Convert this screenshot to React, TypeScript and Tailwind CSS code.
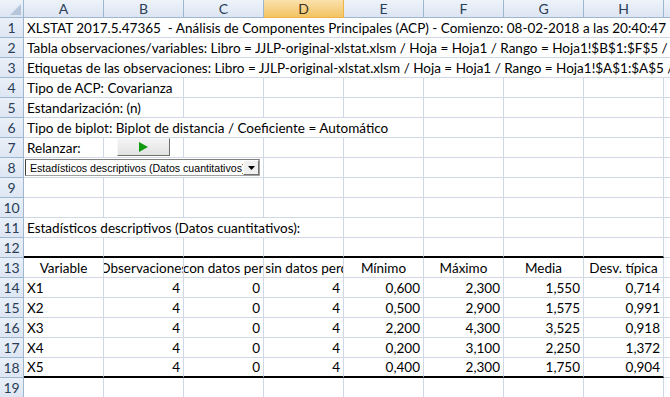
import type { ReactNode } from 'react';

const COLS = ['A', 'B', 'C', 'D', 'E', 'F', 'G', 'H', 'I'];

const spanWidth: Record<number, string> = {
  1: 'w-[80px]',
  2: 'w-[160px]',
  3: 'w-[240px]',
  4: 'w-[320px]',
  5: 'w-[400px]',
  9: 'w-[720px]',
};

const rows = [
  { v: 'X1', obs: 4, con: 0, sin: 4, min: '0,600', max: '2,300', mean: '1,550', sd: '0,714' },
  { v: 'X2', obs: 4, con: 0, sin: 4, min: '0,500', max: '2,900', mean: '1,575', sd: '0,991' },
  { v: 'X3', obs: 4, con: 0, sin: 4, min: '2,200', max: '4,300', mean: '3,525', sd: '0,918' },
  { v: 'X4', obs: 4, con: 0, sin: 4, min: '0,200', max: '3,100', mean: '2,250', sd: '1,372' },
  { v: 'X5', obs: 4, con: 0, sin: 4, min: '0,400', max: '2,300', mean: '1,750', sd: '0,904' },
];

function Cell({
  span = 1,
  align = 'left',
  thick = false,
  clip = false,
  children,
}: {
  span?: number;
  align?: 'left' | 'right' | 'center';
  thick?: boolean;
  clip?: boolean;
  children?: ReactNode;
}) {
  return (
    <div
      className={`${spanWidth[span]} shrink-0 h-full flex items-end whitespace-nowrap border-r border-[#d0d7e5] ${
        thick ? 'border-b-2 border-b-black' : 'border-b border-b-[#d0d7e5]'
      } ${clip ? 'overflow-hidden' : ''} ${
        align === 'right' ? 'justify-end pr-[3px]' : align === 'center' ? 'justify-center' : 'pl-[3px]'
      }`}
    >
      <span className="leading-[18px]">{children}</span>
    </div>
  );
}

function Row({ n, children }: { n: number; children: ReactNode }) {
  return (
    <div className="flex h-[20px]">
      <div className="w-[24px] shrink-0 h-full flex items-center justify-center bg-linear-to-b from-[#eaf0f8] to-[#dde6f3] border-r border-b border-[#9eb6ce] text-[#2b3d57] text-[14px]">
        {n}
      </div>
      {children}
    </div>
  );
}

function Empty({ from = 0, thick = false, to = 9 }: { from?: number; thick?: boolean; to?: number }) {
  return (
    <>
      {COLS.slice(from, to).map((c, i) => (
        <Cell key={c} thick={thick && from + i < 8} />
      ))}
    </>
  );
}

export default function App() {
  return (
    <div className="w-[670px] h-[397px] overflow-hidden bg-white text-black font-['Lato',sans-serif] text-[13.5px]">
      {/* column headers */}
      <div className="flex h-[18px]">
        <div className="w-[24px] shrink-0 h-full bg-linear-to-b from-[#eef3fa] to-[#dce5f2] border-r border-b border-[#9eb6ce] flex items-end justify-end p-[2px]">
          <svg width="11" height="11" viewBox="0 0 11 11">
            <polygon points="11,0 11,11 0,11" fill="#b6c6da" />
          </svg>
        </div>
        {COLS.map((c) => (
          <div
            key={c}
            className={`w-[80px] shrink-0 h-full flex items-center justify-center border-r border-b text-[14px] ${
              c === 'D'
                ? 'bg-linear-to-b from-[#fbe1ac] to-[#f2c461] border-[#f0b548] text-[#3b3220]'
                : 'bg-linear-to-b from-[#eef3fa] to-[#dce5f2] border-[#9eb6ce] text-[#2b3d57]'
            }`}
          >
            {c}
          </div>
        ))}
      </div>

      <Row n={1}>
        <Cell span={9}>
          XLSTAT 2017.5.47365&nbsp; - Análisis de Componentes Principales (ACP) - Comienzo: 08-02-2018 a las 20:40:47 / 08-02-2018 a las 20:40:48
        </Cell>
      </Row>
      <Row n={2}>
        <Cell span={9}>
          Tabla observaciones/variables: Libro = JJLP-original-xlstat.xlsm / Hoja = Hoja1 / Rango = Hoja1!$B$1:$F$5 / 5 filas y 5 columnas
        </Cell>
      </Row>
      <Row n={3}>
        <Cell span={9}>
          Etiquetas de las observaciones: Libro = JJLP-original-xlstat.xlsm / Hoja = Hoja1 / Rango = Hoja1!$A$1:$A$5 / 5 filas y 1 columna
        </Cell>
      </Row>
      <Row n={4}>
        <Cell span={2}>Tipo de ACP: Covarianza</Cell>
        <Empty from={2} />
      </Row>
      <Row n={5}>
        <Cell span={2}>Estandarización: (n)</Cell>
        <Empty from={2} />
      </Row>
      <Row n={6}>
        <Cell span={5}>Tipo de biplot: Biplot de distancia / Coeficiente = Automático</Cell>
        <Empty from={5} />
      </Row>
      <Row n={7}>
        <Cell>Relanzar:</Cell>
        <div className="w-[80px] shrink-0 h-full border-r border-b border-[#d0d7e5] flex items-start">
          <button className="ml-[13px] w-[53px] h-[18px] flex items-center justify-center bg-linear-to-b from-[#f4f4f4] to-[#e2e2e2] border border-t-[#f8f8f8] border-l-[#f8f8f8] border-r-[#6e6e6e] border-b-[#6e6e6e]">
            <svg width="9" height="10" viewBox="0 0 9 10">
              <polygon points="0,0 9,5 0,10" fill="#109a10" />
            </svg>
          </button>
        </div>
        <Empty from={2} />
      </Row>
      <Row n={8}>
        <div className="w-[240px] shrink-0 h-full border-r border-b border-[#d0d7e5] pl-[1px] py-[1px]">
          <div className="w-[235px] h-full flex bg-white border border-[#a0a0a0] border-l-[#404040] border-t-[#808080]">
            <div className="flex-1 overflow-hidden whitespace-nowrap font-['Liberation_Sans',sans-serif] text-[10.6px] leading-[16px] pl-[4px]">
              Estadísticos descriptivos (Datos cuantitativos)
            </div>
            <div className="w-[16px] h-full flex items-center justify-center bg-[#f0f0f0] border border-t-[#ffffff] border-l-[#ffffff] border-r-[#707070] border-b-[#707070]">
              <svg width="7" height="4" viewBox="0 0 7 4">
                <polygon points="0,0 7,0 3.5,4" fill="#000" />
              </svg>
            </div>
          </div>
        </div>
        <Empty from={3} />
      </Row>
      <Row n={9}>
        <Empty />
      </Row>
      <Row n={10}>
        <Empty />
      </Row>
      <Row n={11}>
        <Cell span={4}>Estadísticos descriptivos (Datos cuantitativos):</Cell>
        <Empty from={4} />
      </Row>
      <Row n={12}>
        <Empty thick />
      </Row>
      <Row n={13}>
        <Cell align="center" clip>Variable</Cell>
        <Cell align="center" clip>Observaciones</Cell>
        <Cell align="center" clip>Obs. con datos perdidos</Cell>
        <Cell align="center" clip>Obs. sin datos perdidos</Cell>
        <Cell align="center" clip>Mínimo</Cell>
        <Cell align="center" clip>Máximo</Cell>
        <Cell align="center" clip>Media</Cell>
        <Cell align="center" clip>Desv. típica</Cell>
        <Cell />
      </Row>
      {rows.map((r, i) => {
        const last = i === rows.length - 1;
        return (
          <Row key={r.v} n={14 + i}>
            <Cell thick={last}>{r.v}</Cell>
            <Cell align="right" thick={last}>{r.obs}</Cell>
            <Cell align="right" thick={last}>{r.con}</Cell>
            <Cell align="right" thick={last}>{r.sin}</Cell>
            <Cell align="right" thick={last}>{r.min}</Cell>
            <Cell align="right" thick={last}>{r.max}</Cell>
            <Cell align="right" thick={last}>{r.mean}</Cell>
            <Cell align="right" thick={last}>{r.sd}</Cell>
            <Cell />
          </Row>
        );
      })}
      <Row n={19}>
        <Empty />
      </Row>
    </div>
  );
}
